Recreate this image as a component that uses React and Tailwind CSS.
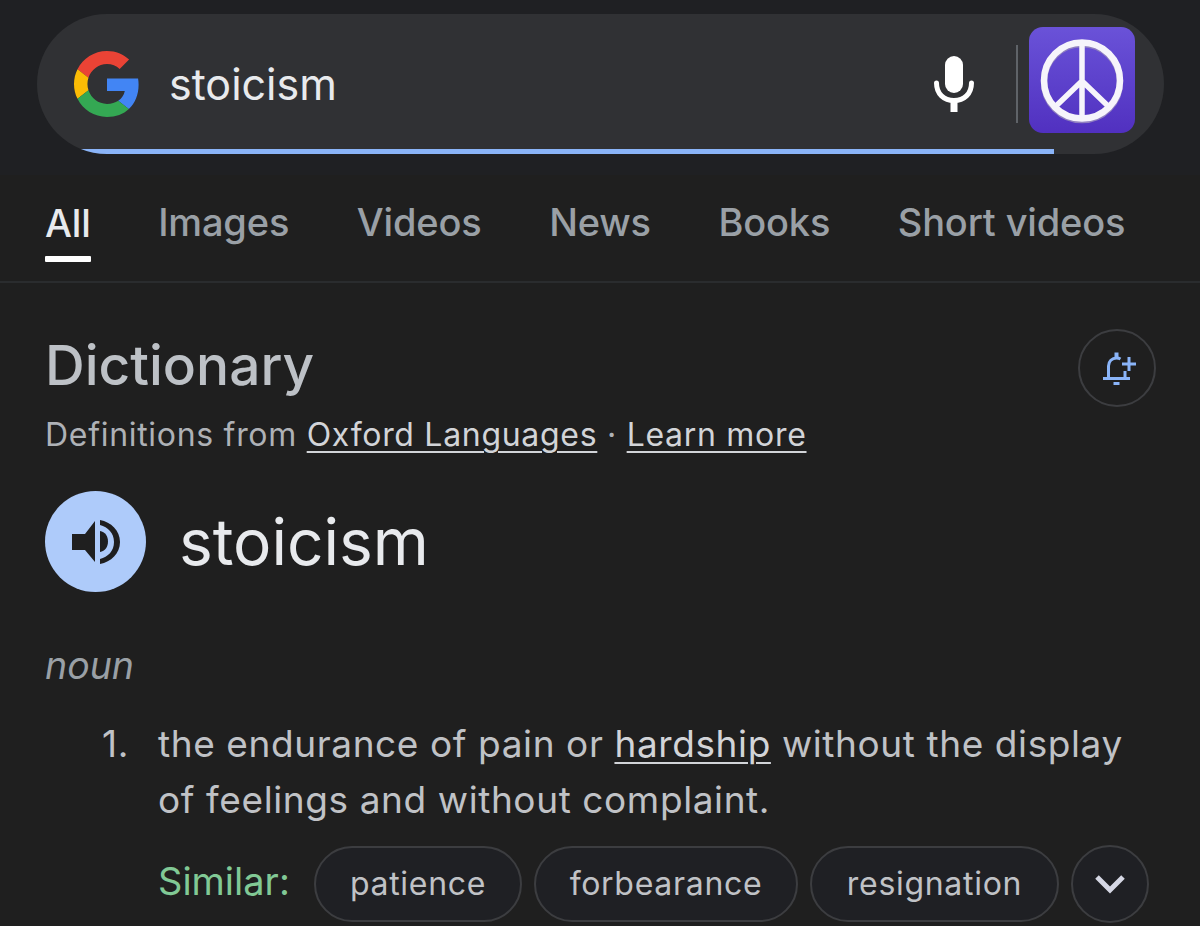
const F = "font-['Inter','Liberation_Sans',sans-serif]";

function GoogleG() {
  return (
    <svg width="66" height="66" viewBox="0 0 48 48">
      <path fill="#EA4335" d="M24 9.5c3.54 0 6.71 1.22 9.21 3.6l6.85-6.85C35.9 2.38 30.47 0 24 0 14.62 0 6.51 5.38 2.56 13.22l7.98 6.19C12.43 13.72 17.74 9.5 24 9.5z" />
      <path fill="#4285F4" d="M46.98 24.55c0-1.57-.15-3.09-.38-4.55H24v9.02h12.94c-.58 2.96-2.26 5.48-4.78 7.18l7.73 6c4.51-4.18 7.09-10.36 7.09-17.65z" />
      <path fill="#FBBC05" d="M10.53 28.59c-.48-1.45-.76-2.99-.76-4.59s.27-3.14.76-4.59l-7.98-6.19C.92 16.46 0 20.12 0 24c0 3.88.92 7.54 2.56 10.78l7.97-6.19z" />
      <path fill="#34A853" d="M24 48c6.48 0 11.93-2.13 15.89-5.81l-7.73-6c-2.15 1.45-4.92 2.3-8.16 2.3-6.26 0-11.57-4.22-13.47-9.91l-7.98 6.19C6.51 42.62 14.62 48 24 48z" />
    </svg>
  );
}

function Mic() {
  return (
    <svg width="40" height="56" viewBox="0 0 40 56" className="mt-[8px]">
      <rect x="11" y="0" width="18" height="37" rx="9" fill="#fff" />
      <path d="M2.5 27c0 11 7.5 17.500 17.500 17.500S37.500 38 37.500 27" fill="none" stroke="#fff" strokeWidth="5" strokeLinecap="round" />
      <rect x="16.500" y="44" width="7" height="12" fill="#fff" />
    </svg>
  );
}

function Peace() {
  return (
    <div className="w-[106px] h-[106px] rounded-[14px] bg-gradient-to-b from-[#6a52d8] to-[#5130c0] flex items-center justify-center">
      <svg width="84" height="90" viewBox="0 0 84 90">
        <g fill="none" stroke="#8f7fc0" strokeWidth="6.5">
          <circle cx="42" cy="47" r="38" />
        </g>
        <g fill="none" stroke="#f6f4fb" strokeWidth="6.5">
          <circle cx="42" cy="45.5" r="38" />
        </g>
        <g fill="none" stroke="#f6f4fb" strokeWidth="5.5">
          <path d="M42 7v77M42 46L16 71M42 46l26 25" />
        </g>
      </svg>
    </div>
  );
}

function BellPlus() {
  return (
    <svg width="34" height="33" viewBox="0 0 34 33" fill="none" stroke="#8ab4f8" strokeWidth="3">
      <path d="M5.500 26V14c0-4.500 3.500-8 8-8 1.500 0 3 .4 4 1M22 19v7" />
      <path d="M0 26.500h27" strokeWidth="3" />
      <path d="M10.500 31.500h6" />
      <path d="M13.500 0.500v5" strokeWidth="4" />
      <path d="M26 5v14M19 12h14" strokeWidth="3" />
    </svg>
  );
}

function Speaker() {
  return (
    <svg width="48" height="46" viewBox="0 0 48 46" fill="#1f1f1f">
      <path d="M0 15h13L23 2v41L13 31H0z" />
      <path d="M28 12c5 1 8 5 8 10.500S33 32 28 33z" />
      <path d="M28 1c11 2 20 10.500 20 22S39 43 28 45v-5c8-2 14-8 14-17S36 8 28 6z" />
    </svg>
  );
}

function Chip({ children, className }) {
  return (
    <div className={"h-[76px] rounded-full border-2 border-[#3c3d40] bg-[#1f2024] flex items-center justify-center text-[32px] tracking-[0.7px] text-[#c0c2c6] " + className}>
      {children}
    </div>
  );
}

export default function App() {
  const tabs = ["Images", "Videos", "News", "Books", "Short videos"];
  return (
    <div className={"w-[1200px] h-[926px] overflow-hidden bg-[#1f1f1f] " + F}>
      <header className="h-[175px] bg-[#1f2023] pt-[14px] pl-[37px]">
        <div className="relative w-[1127px] h-[140px] rounded-full bg-[#303134] flex items-center overflow-hidden pl-[37px] pr-[29px]">
          <GoogleG />
          <span className="ml-[29px] text-[43px] text-[#e8eaed] leading-none mt-[1px]">stoicism</span>
          <div className="ml-auto flex items-center -mt-[8px]">
            <Mic />
            <div className="ml-[42px] mt-[8px] w-[2px] h-[78px] bg-[#5f6368]" />
            <div className="ml-[11px]"><Peace /></div>
          </div>
          <div className="absolute left-0 bottom-0 w-[1017px] h-[5px] bg-[#8ab4f8]" />
        </div>
      </header>

      <nav className="h-[108px] border-b-2 border-[#2a2c2e] flex pl-[45px] font-medium tracking-[-0.15px]">
        <div className="relative pt-[27px] text-[38px] leading-[42px] text-[#e8eaed]">
          All
          <div className="absolute left-0 right-0 bottom-[19px] h-[6px] bg-white rounded-[1px]" />
        </div>
        {tabs.map((t) => (
          <div key={t} className="pt-[26px] ml-[67.5px] text-[38px] leading-[42px] text-[#9aa0a6]">{t}</div>
        ))}
      </nav>

      <main className="pl-[45px] pr-[44px]">
        <div className="flex justify-between items-start pt-[46px]">
          <h2 className="text-[55px] leading-[64px] mt-[4px] font-medium text-[#bdc1c6]">Dictionary</h2>
          <div className="w-[78px] h-[78px] rounded-full border-2 border-[#3c3d40] flex items-center justify-center pl-[6px]">
            <BellPlus />
          </div>
        </div>
        <p className="mt-[8px] text-[32px] leading-[40px] tracking-[0.7px] text-[#aeb1b6]">
          Definitions from <span className="underline underline-offset-[5px] decoration-2 text-[#d2d4d8]">Oxford Languages</span> · <span className="underline underline-offset-[5px] decoration-2 text-[#d2d4d8]">Learn more</span>
        </p>
        <div className="mt-[36px] flex items-center">
          <div className="w-[101px] h-[101px] rounded-full bg-[#aecbfa] flex items-center justify-center"><Speaker /></div>
          <span className="ml-[33px] text-[64px] leading-[70px] text-[#e8eaed]">stoicism</span>
        </div>
        <p className="mt-[52px] text-[37.5px] leading-[44px] italic text-[#9aa0a6]">noun</p>
        <div className="mt-[28px] flex text-[37px] leading-[56px] tracking-[0.6px] text-[#c0c2c6]">
          <span className="w-[113px] pl-[57px]">1.</span>
          <div className="flex-1 whitespace-nowrap">
            the endurance of pain or <span className="underline underline-offset-[5px] decoration-2 text-[#d2d4d8]">hardship</span> without the display
            <br />
            of feelings and without complaint.
          </div>
        </div>
        <div className="mt-[17px] ml-[113px] flex items-center">
          <span className="w-[131px] text-[38px] whitespace-nowrap text-[#81c995] -mt-[5px]">Similar:</span>
          <Chip className="ml-[25px] w-[208px]">patience</Chip>
          <Chip className="ml-[12px] w-[264px]">forbearance</Chip>
          <Chip className="ml-[12px] w-[249px]">resignation</Chip>
          <div className="ml-[12px] w-[78px] h-[78px] rounded-full border-2 border-[#3c3d40] bg-[#1f2024] flex items-center justify-center">
            <svg width="32" height="22" viewBox="0 0 32 22" fill="none" stroke="#d5d7e4" strokeWidth="5"><path d="M3 4l13 13L29 4" /></svg>
          </div>
        </div>
      </main>
    </div>
  );
}
